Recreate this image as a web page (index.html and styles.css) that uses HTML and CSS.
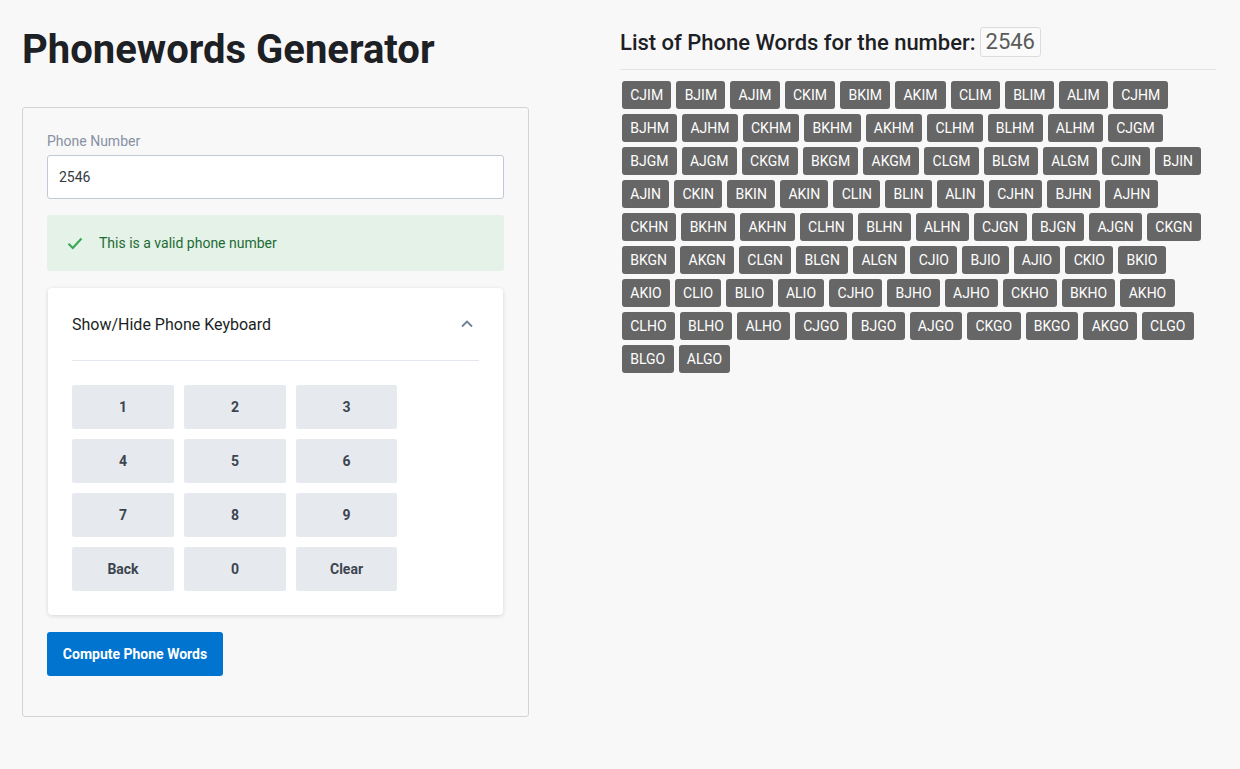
FILE: index.html
```html
<!DOCTYPE html>
<html>
<head>
<meta charset="utf-8">
<link rel="stylesheet" href="styles.css">
</head>
<body>
<div class="page">
  <div class="left">
    <h1 class="title">Phonewords Generator</h1>
    <div class="panel">
      <label class="field-label">Phone Number</label>
      <div class="input">2546</div>
      <div class="alert">
        <svg class="check" width="16" height="13" viewBox="0 0 16 13"><path d="M1.5 6.8 L5.8 11 L14.5 1.5" fill="none" stroke="#3aa955" stroke-width="2.2"/></svg>
        <span>This is a valid phone number</span>
      </div>
      <div class="kbd-card">
        <div class="kbd-head">
          <span>Show/Hide Phone Keyboard</span>
          <svg width="12" height="8" viewBox="0 0 12 8"><path d="M1 6.5 L6 1.5 L11 6.5" fill="none" stroke="#6e7f96" stroke-width="1.8"/></svg>
        </div>
        <div class="keys">
          <div class="key">1</div><div class="key">2</div><div class="key">3</div>
          <div class="key">4</div><div class="key">5</div><div class="key">6</div>
          <div class="key">7</div><div class="key">8</div><div class="key">9</div>
          <div class="key">Back</div><div class="key">0</div><div class="key">Clear</div>
        </div>
      </div>
      <div class="btn">Compute Phone Words</div>
    </div>
  </div>
  <div class="right">
    <h2 class="list-title"><span>List of Phone Words for the number:</span><span class="num">2546</span></h2>
    <div class="words">
      <span class="w">CJIM</span><span class="w">BJIM</span><span class="w">AJIM</span><span class="w">CKIM</span><span class="w">BKIM</span><span class="w">AKIM</span><span class="w">CLIM</span><span class="w">BLIM</span><span class="w">ALIM</span><span class="w">CJHM</span>
      <span class="w">BJHM</span><span class="w">AJHM</span><span class="w">CKHM</span><span class="w">BKHM</span><span class="w">AKHM</span><span class="w">CLHM</span><span class="w">BLHM</span><span class="w">ALHM</span><span class="w">CJGM</span>
      <span class="w">BJGM</span><span class="w">AJGM</span><span class="w">CKGM</span><span class="w">BKGM</span><span class="w">AKGM</span><span class="w">CLGM</span><span class="w">BLGM</span><span class="w">ALGM</span><span class="w">CJIN</span><span class="w">BJIN</span>
      <span class="w">AJIN</span><span class="w">CKIN</span><span class="w">BKIN</span><span class="w">AKIN</span><span class="w">CLIN</span><span class="w">BLIN</span><span class="w">ALIN</span><span class="w">CJHN</span><span class="w">BJHN</span><span class="w">AJHN</span>
      <span class="w">CKHN</span><span class="w">BKHN</span><span class="w">AKHN</span><span class="w">CLHN</span><span class="w">BLHN</span><span class="w">ALHN</span><span class="w">CJGN</span><span class="w">BJGN</span><span class="w">AJGN</span><span class="w">CKGN</span>
      <span class="w">BKGN</span><span class="w">AKGN</span><span class="w">CLGN</span><span class="w">BLGN</span><span class="w">ALGN</span><span class="w">CJIO</span><span class="w">BJIO</span><span class="w">AJIO</span><span class="w">CKIO</span><span class="w">BKIO</span>
      <span class="w">AKIO</span><span class="w">CLIO</span><span class="w">BLIO</span><span class="w">ALIO</span><span class="w">CJHO</span><span class="w">BJHO</span><span class="w">AJHO</span><span class="w">CKHO</span><span class="w">BKHO</span><span class="w">AKHO</span>
      <span class="w">CLHO</span><span class="w">BLHO</span><span class="w">ALHO</span><span class="w">CJGO</span><span class="w">BJGO</span><span class="w">AJGO</span><span class="w">CKGO</span><span class="w">BKGO</span><span class="w">AKGO</span><span class="w">CLGO</span>
      <span class="w">BLGO</span><span class="w">ALGO</span>
    </div>
  </div>
</div>
</body>
</html>
```
FILE: styles.css
```css
* { box-sizing: border-box; }
html, body {
  margin: 0;
  background: #f8f8f8;
  font-family: Roboto, "Liberation Sans", sans-serif;
  color: #1f2328;
}
.page {
  display: flex;
  padding: 0 24px 0 22px;
}
.left {
  width: 507px;
  flex: none;
}
.title {
  margin: 26px 0 0;
  height: 81px;
  font-size: 40px;
  font-weight: 700;
  line-height: 48px;
  color: #1d2024;
}
.panel {
  border: 1px solid #d3d3d3;
  border-radius: 3px;
  padding: 24px 24px 39px;
  height: 610px;
}
.field-label {
  display: block;
  font-size: 14px;
  line-height: 20px;
  color: #8791a3;
  height: 23px;
  margin-top: -1px;
  margin-bottom: 1px;
}
.input {
  height: 44px;
  background: #fff;
  border: 1px solid #c1c9d4;
  border-radius: 3px;
  padding: 0 11px;
  font-size: 14px;
  line-height: 42px;
  color: #343a40;
}
.alert {
  margin-top: 16px;
  height: 56px;
  background: #e4f2e7;
  border-radius: 3px;
  display: flex;
  align-items: center;
  padding-left: 20px;
  font-size: 14px;
  color: #1d6b35;
}
.check { margin-right: 16px; }
.kbd-card {
  margin-top: 17px;
  background: #fff;
  border-radius: 4px;
  box-shadow: 0 1px 4px rgba(0,0,0,0.14);
  padding: 0 24px 24px;
  margin-left: 1px;
  margin-right: 1px;
}
.kbd-head {
  height: 73px;
  border-bottom: 1px solid #e3e8ee;
  display: flex;
  align-items: center;
  justify-content: space-between;
  font-size: 16px;
  color: #1b1f24;
  padding-right: 6px;
}
.keys {
  display: grid;
  grid-template-columns: 102px 102px 101px;
  grid-auto-rows: 44px;
  gap: 10px;
  margin-top: 24px;
}
.key {
  background: #e6eaef;
  border-radius: 2px;
  display: flex;
  align-items: center;
  justify-content: center;
  font-size: 14px;
  font-weight: 700;
  color: #3d4450;
}
.btn {
  margin-top: 17px;
  width: 176px;
  height: 44px;
  background: #0074cf;
  border-radius: 3px;
  color: #fff;
  font-size: 14px;
  font-weight: 700;
  display: flex;
  align-items: center;
  justify-content: center;
}
.right {
  margin-left: 91px;
  flex: 1;
}
.list-title {
  margin: 27px 0 0;
  display: flex;
  align-items: center;
  gap: 4px;
  height: 43px;
  font-size: 22px;
  font-weight: 500;
  color: #1d2024;
  padding-bottom: 12px;
  border-bottom: 1px solid #e4e4e4;
}
.num {
  display: inline-block;
  border: 1px solid #dcdcdc;
  border-radius: 3px;
  padding: 0 5px;
  font-size: 22px;
  font-weight: 400;
  height: 30px;
  line-height: 28px;
  color: #5a5a5a;
  background: #fafafa;
}
.words {
  display: flex;
  flex-wrap: wrap;
  gap: 5px;
  padding: 11px 8px 0 2px;
}
.w {
  background: #666;
  color: #fff;
  font-size: 14px;
  height: 28px;
  line-height: 28px;
  padding: 0 8.25px;
  border-radius: 3px;
}
```
